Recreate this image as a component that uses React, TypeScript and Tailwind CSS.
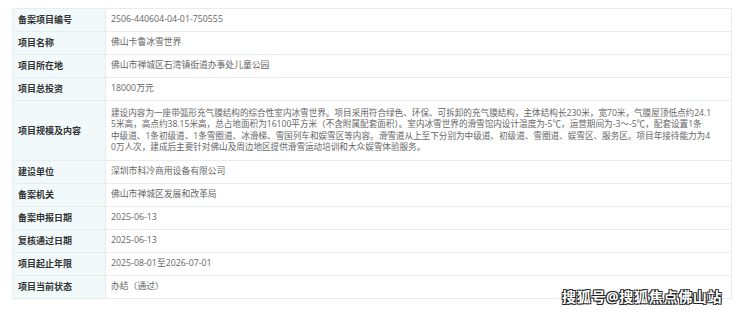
const ROWS: { label: string; value: string | string[] }[] = [
  { label: "备案项目编号", value: "2506-440604-04-01-750555" },
  { label: "项目名称", value: "佛山卡鲁冰雪世界" },
  { label: "项目所在地", value: "佛山市禅城区石湾镇街道办事处儿童公园" },
  { label: "项目总投资", value: "18000万元" },
  {
    label: "项目规模及内容",
    value: [
      "建设内容为一座带弧形充气膜结构的综合性室内冰雪世界。项目采用符合绿色、环保、可拆卸的充气膜结构，主体结构长230米，宽70米，气膜屋顶低点约24.1",
      "5米高，高点约38.15米高，总占地面积为16100平方米（不含附属配套面积）。室内冰雪世界的滑雪馆内设计温度为-5℃，运营期间为-3～-5℃，配套设置1条",
      "中级道、1条初级道、1条雪圈道、冰滑梯、雪国列车和娱雪区等内容。滑雪道从上至下分别为中级道、初级道、雪圈道、娱雪区、服务区。项目年接待能力为4",
      "0万人次，建成后主要针对佛山及周边地区提供滑雪运动培训和大众娱雪体验服务。",
    ],
  },
  { label: "建设单位", value: "深圳市科冷商用设备有限公司" },
  { label: "备案机关", value: "佛山市禅城区发展和改革局" },
  { label: "备案申报日期", value: "2025-06-13" },
  { label: "复核通过日期", value: "2025-06-13" },
  { label: "项目起止年限", value: "2025-08-01至2026-07-01" },
  { label: "项目当前状态", value: "办结（通过）" },
];

export default function App() {
  return (
    <div
      className="relative h-[312px] w-[740px] overflow-hidden bg-white pl-[12px] pt-[8px]"
      style={{ fontFamily: '"Open Sans", "Noto Sans CJK SC", sans-serif' }}
    >
      <table className="w-[720px] table-fixed border-collapse">
        <colgroup>
          <col className="w-[93px]" />
          <col />
        </colgroup>
        <tbody>
          {ROWS.map((r) => {
            const multi = Array.isArray(r.value);
            return (
              <tr key={r.label} className={multi ? "h-[60px]" : "h-[23px]"}>
                <td className="border border-[#e9ecee] bg-[#f2f9fb] pl-[5px] text-[9px] font-bold text-[#333]">
                  {r.label}
                </td>
                <td className="border border-[#e9ecee] pl-[5px] text-[8.8px] text-[#666]">
                  {multi ? (
                    <div className="text-[8.6px] leading-[11.5px]">
                      {(r.value as string[]).map((line) => (
                        <div key={line} className="whitespace-nowrap">
                          {line}
                        </div>
                      ))}
                    </div>
                  ) : (
                    r.value
                  )}
                </td>
              </tr>
            );
          })}
        </tbody>
      </table>

      <div
        className="absolute left-[562px] top-[286px] text-[14px] font-bold tracking-[0.7px] text-white"
        style={{
          textShadow:
            "1px 1px 0 #222, -1px -1px 0 #222, 1px -1px 0 #222, -1px 1px 0 #222",
        }}
      >
        搜狐号@搜狐焦点佛山站
      </div>
    </div>
  );
}
